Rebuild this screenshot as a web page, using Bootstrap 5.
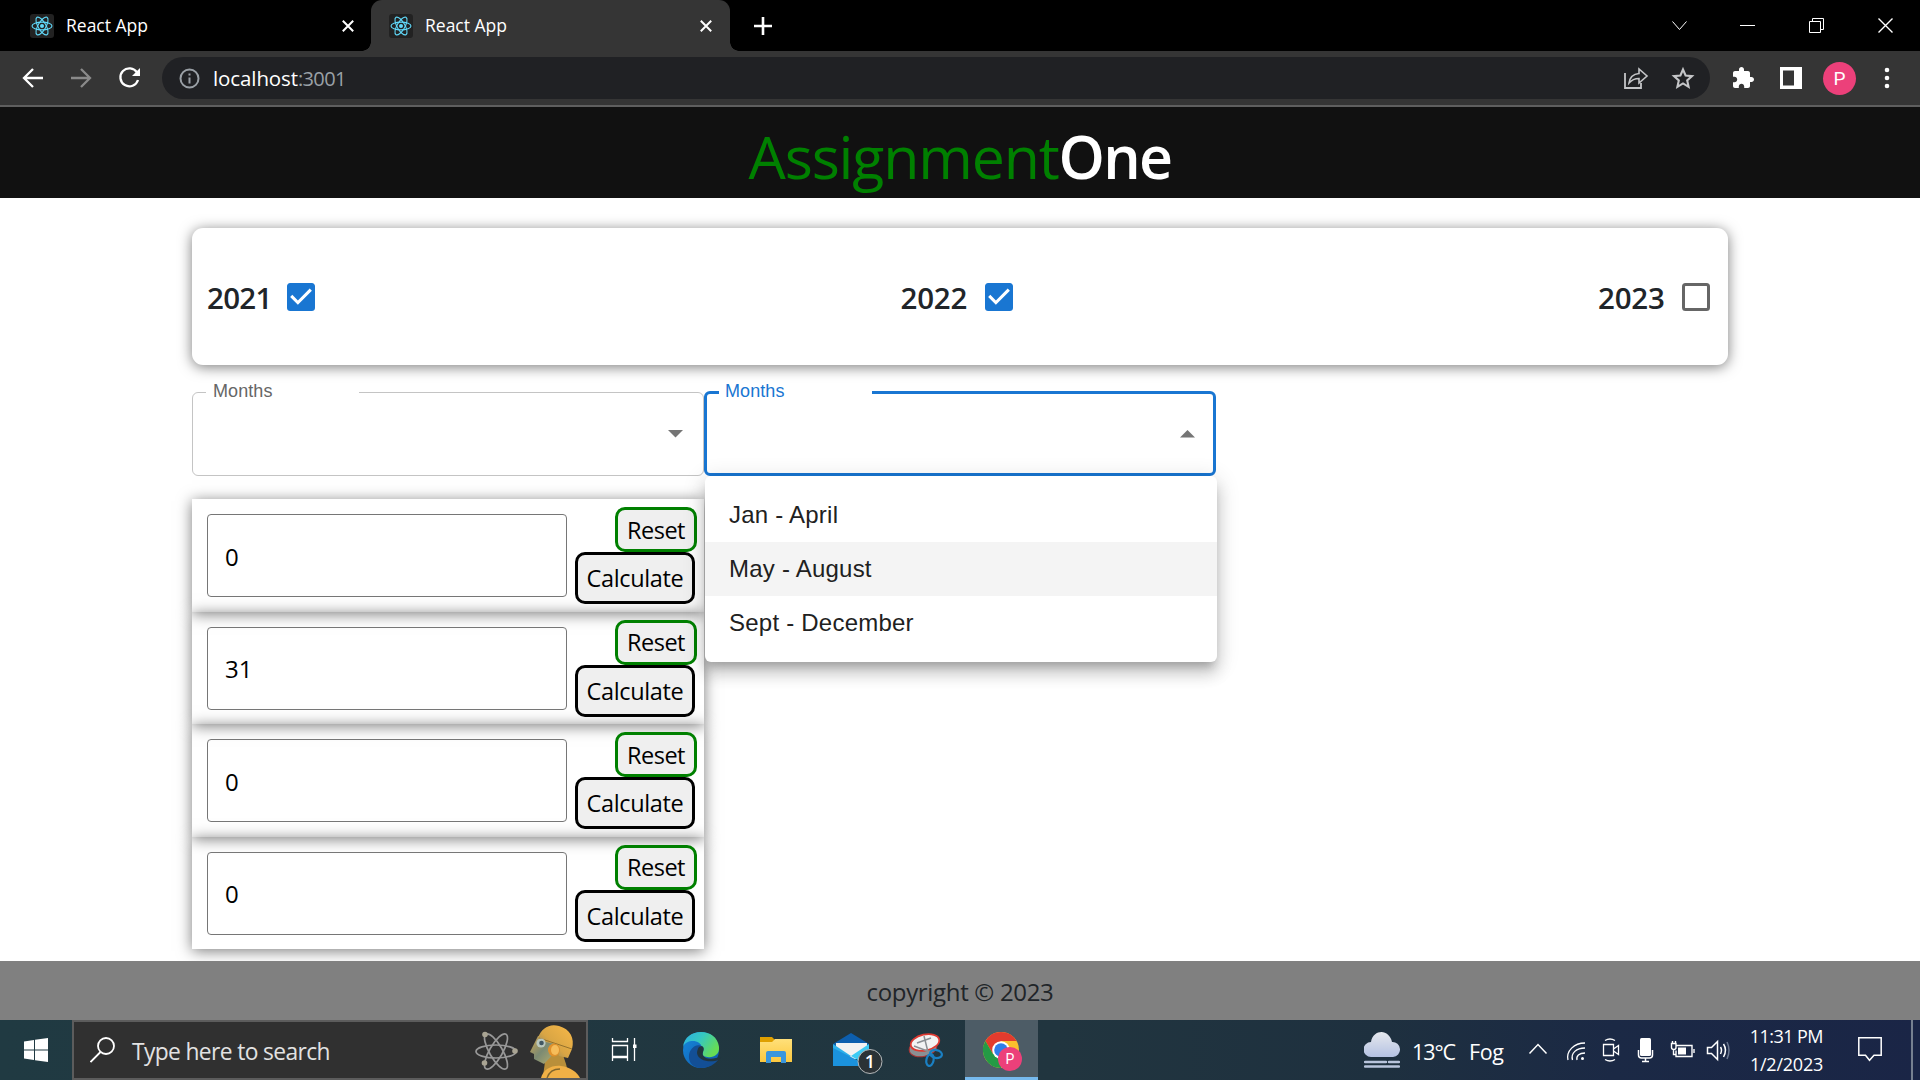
<!DOCTYPE html>
<html lang="en">
<head>
<meta charset="utf-8">
<title>React App</title>
<link href="https://cdn.jsdelivr.net/npm/bootstrap@5.3.0/dist/css/bootstrap.min.css" rel="stylesheet">
<style>
body{width:1920px;height:1080px;overflow:hidden;font-family:"Open Sans","Noto Sans",sans-serif;font-size:24px;line-height:1;background:#fff;color:#212529}
svg{display:block;flex:none}
.txt{white-space:nowrap;flex:none;line-height:1.36}
.tabstrip{height:51px;background:#000;color:#fff}
.tab-item{width:359px;height:51px;padding:0 18px 0 18px;font-size:17.5px}
.tab-item .txt{margin-left:12px}
.tab-first{width:371px;padding:0 17px 0 30px}
.tab-active{background:#353535;border-radius:11px 11px 0 0;position:relative}
.tab-active::before,.tab-active::after{content:"";position:absolute;bottom:0;width:9px;height:9px}
.tab-active::before{left:-9px;background:radial-gradient(circle at 0 0,transparent 8.5px,#353535 9px)}
.tab-active::after{right:-9px;background:radial-gradient(circle at 100% 0,transparent 8.5px,#353535 9px)}
.toolbar{height:56px;background:#353535;border-bottom:2px solid #5f5f5f;color:#fff}
.omnibox{width:1548px;height:42px;border-radius:21px;background:#202124;font-size:20.5px}
.omnibox .txt{padding-top:1px}
.host{margin-left:13px;letter-spacing:-.1px}
.port{color:#9aa0a6;font-size:20px;letter-spacing:-.65px}
.avatar{width:33px;height:33px;border-radius:50%;background:#ec407a;font:19px Roboto,sans-serif}
.brandbar{height:91px;background:#111;font-size:59px;padding-top:7px}
.brand-a{color:green;letter-spacing:-1.16px}
.brand-b{color:#fff;font-weight:600;letter-spacing:-1.7px}
.wrap{width:1536px}
.panel{border-radius:11px;box-shadow:0 2px 14px rgba(0,0,0,.52)}
.years{height:137px;margin-top:30px;padding:1px 18px 0 15px;font-size:29.5px;font-weight:600}
.years .txt{padding-top:3px;letter-spacing:-.2px}
.years .narrow{letter-spacing:-.7px}
.selects{margin-top:19px}
.sel{width:512px;height:92px;position:relative;font-family:"Liberation Sans",Arial,sans-serif}
.sel fieldset{position:absolute;inset:0;border:1px solid rgba(0,0,0,.23);border-radius:6px;padding:0 0 0 13px;margin:0;min-width:0}
.sel legend{float:none;width:153px;height:17px;line-height:15px;font-size:18px;letter-spacing:.08px;color:#666;padding:0 7px;margin:0}
.sel.focus fieldset{border:3px solid #1976d2;padding-left:12px}
.sel.focus legend{color:#1976d2;padding-left:6px}
.sel>svg{position:absolute;right:21px;top:46px}
.menu-pop{position:absolute;left:1px;top:92px;width:512px;height:186px;padding:12px 0;background:#fff;border-radius:6px;z-index:5;box-shadow:0 8px 8px -4px rgba(0,0,0,.2),0 12px 15px 1px rgba(0,0,0,.14),0 4px 21px 3px rgba(0,0,0,.12);font-size:24px;letter-spacing:.225px;color:#212121}
.menu-pop div{height:54px;line-height:54px;padding-left:24px}
.menu-pop .over{background:#f4f4f4}
.rows{margin-top:23px;width:512px}
.entry{height:112.5px;padding:8px 7px 0 15px;box-shadow:0 2px 14px rgba(0,0,0,.52)}
.field{width:360px;height:83px;margin-top:7px;padding:2px 0 0 17px;border:1px solid #767676;border-radius:4px;color:#000}
.pill{background:#efefef;border:3px solid green;border-radius:10px;color:#000;padding-top:2px}
.reset{width:82px;height:45px;font-size:23.5px;letter-spacing:-.5px}
.calc{width:120px;height:52px;border-color:#000;margin-right:2px;font-size:23.5px;letter-spacing:-.35px}
.foot{height:59px;margin-top:auto;background:#808080;padding-top:4px;letter-spacing:-.32px}
.taskbar{height:60px;background:linear-gradient(90deg,#203a42 0,#21353f 55%,#1e303f 72%,#1b2945 84%,#1a2546 100%);color:#fff}
.search{width:516px;height:60px;background:#303030;border:2px solid #5c5c5c;color:#e2e2e2}
.search-text{margin-left:17px;padding-top:3px;font-size:22.8px;letter-spacing:-.63px}
.weather{font-size:21.500px;padding-top:4px}
.temp{letter-spacing:-1.1px;margin-left:12px}
.sky{letter-spacing:-.3px;margin-left:14px}
.active-app{width:73px;height:60px;background:#4d5c66;border-bottom:3px solid #76b9ed}
.clock{font-size:18px;width:74px;margin-left:18px}
.clock .txt{line-height:28px}
.peek{margin-left:29px;width:2px;height:60px;background:#768090}
</style>
<script src="https://cdn.jsdelivr.net/npm/bootstrap@5.3.0/dist/js/bootstrap.bundle.min.js"></script>
</head>
<body class="d-flex flex-column">
<svg width="0" height="0" class="position-absolute"><defs>
<symbol id="react" viewBox="0 0 24 24"><rect width="24" height="24" rx="3" fill="#222"/><g fill="none" stroke="#61dafb" stroke-width="1.1"><ellipse cx="12" cy="12" rx="10" ry="3.9"/><ellipse cx="12" cy="12" rx="10" ry="3.9" transform="rotate(60 12 12)"/><ellipse cx="12" cy="12" rx="10" ry="3.9" transform="rotate(120 12 12)"/></g><circle cx="12" cy="12" r="2" fill="#61dafb"/></symbol>
<symbol id="x" viewBox="0 0 12 12"><path d="M.8.8l10.400 10.400M11.200.8L.8 11.200" stroke="#fff" stroke-width="2"/></symbol>
<symbol id="checked" viewBox="3 3 18 18"><path fill="#1976d2" d="M19 3H5c-1.110 0-2 .9-2 2v14c0 1.100.89 2 2 2h14c1.110 0 2-.9 2-2V5c0-1.100-.89-2-2-2zm-9 14l-5-5 1.410-1.410L10 14.170l7.590-7.590L19 8l-9 9z"/></symbol>
</defs></svg>

<header>
<div class="tabstrip d-flex align-items-center">
  <div class="tab-item tab-first d-flex align-items-center"><svg width="24" height="24"><use href="#react"/></svg><span class="txt">React App</span><svg class="ms-auto" width="12" height="12"><use href="#x"/></svg></div>
  <div class="tab-item tab-active d-flex align-items-center"><svg width="24" height="24"><use href="#react"/></svg><span class="txt">React App</span><svg class="ms-auto" width="12" height="12"><use href="#x"/></svg></div>
  <svg width="18" height="18" style="margin-left:24px"><path d="M9 0v18M0 9h18" stroke="#fff" stroke-width="2.600"/></svg>
  <svg class="ms-auto" width="248" height="26" viewBox="1672 9 248 26" fill="none" stroke="#fff" stroke-width="1"><path d="M1672.500 17.500l7 8 7-8M1740 21.500h15M1809.500 17.500h11v11h-11zM1812.500 17v-2.500h11v11h-3"/><path stroke-width="1.400" d="M1878.500 14.500l14 14M1892.500 14.500l-14 14"/></svg>
</div>
<div class="toolbar d-flex align-items-center">
  <svg width="162" height="30" viewBox="0 63 162 30" fill="none" stroke="#fff" stroke-width="2.300"><path d="M43 78H25M33 69l-9 9 9 9"/><path stroke="#8a8a8a" d="M71 78h18M81 69l9 9-9 9"/><path d="M137 72.500A9 9 0 1 0 138 80"/><path d="M140 68v8h-8z" fill="#fff" stroke="none"/></svg>
  <div class="omnibox d-flex align-items-center">
    <svg width="21" height="21" viewBox="0 0 21 21" style="margin-left:17px" fill="none" stroke="#9aa0a6" stroke-width="2"><circle cx="10.500" cy="10.500" r="9"/><path d="M10.500 9.500v6M10.500 5.500v2"/></svg>
    <span class="txt host">localhost</span><span class="txt port">:3001</span>
    <svg class="ms-auto" style="margin-right:15px" width="72" height="24" viewBox="1623 66 72 24" fill="none" stroke="#c4c5c7" stroke-width="1.800"><path d="M1625 73v15h16v-5"/><path d="M1629 83c1-7 5-9 10-9.500v-4.500l8 7-8 7v-4.500c-4 0-7 1-10 4.500z" stroke-width="1.600"/><path d="M1683 69.500l2.600 6 6.400.600-4.800 4.300 1.400 6.400-5.600-3.400-5.600 3.400 1.400-6.400-4.800-4.300 6.400-.600z" stroke-width="2.100"/></svg>
  </div>
  <svg style="margin-left:21px" width="24" height="24" viewBox="0 0 24 24"><path fill="#fff" d="M20.500 11H19V7c0-1.100-.9-2-2-2h-4V3.500C13 2.120 11.880 1 10.500 1S8 2.120 8 3.500V5H4c-1.100 0-1.990.9-1.990 2v3.800H3.500c1.490 0 2.700 1.210 2.700 2.700s-1.210 2.700-2.700 2.700H2V20c0 1.100.9 2 2 2h3.800v-1.500c0-1.490 1.210-2.700 2.700-2.700s2.700 1.210 2.700 2.700V22H17c1.100 0 2-.9 2-2v-4h1.500c1.380 0 2.500-1.120 2.500-2.500S21.880 11 20.500 11z"/></svg>
  <svg style="margin-left:25px" width="22" height="22"><path fill="#fff" fill-rule="evenodd" d="M0 0h22v22H0zM3 3.500v15h11v-15z"/></svg>
  <div class="avatar d-flex align-items-center justify-content-center" style="margin-left:21px">P</div>
  <svg style="margin-left:28px" width="6" height="22" fill="#fff"><circle cx="3" cy="3" r="2.300"/><circle cx="3" cy="11" r="2.300"/><circle cx="3" cy="19" r="2.300"/></svg>
</div>
</header>

<div class="brandbar d-flex align-items-center justify-content-center"><span class="txt brand-a">Assignment</span><span class="txt brand-b">One</span></div>

<main class="wrap mx-auto">
  <div class="panel years d-flex align-items-center justify-content-between">
    <div class="d-flex align-items-center justify-content-between" style="width:108px"><span class="txt narrow">2021</span><svg width="28" height="28"><use href="#checked"/></svg></div>
    <div class="d-flex align-items-center justify-content-between" style="width:112px"><span class="txt">2022</span><svg width="28" height="28"><use href="#checked"/></svg></div>
    <div class="d-flex align-items-center justify-content-between" style="width:112px"><span class="txt">2023</span><svg width="28" height="28"><rect x="1.500" y="1.500" width="25" height="25" rx="2" fill="none" stroke="#666" stroke-width="3"/></svg></div>
  </div>
  <div class="selects d-flex">
    <div class="sel"><fieldset><legend>Months</legend></fieldset><svg width="15" height="8"><path d="M0 0h15L7.500 7.500z" fill="#757575"/></svg></div>
    <div class="sel focus"><fieldset><legend>Months</legend></fieldset><svg width="15" height="8"><path d="M0 7.500h15L7.500 0z" fill="#757575"/></svg>
      <div class="menu-pop"><div>Jan - April</div><div class="over">May - August</div><div>Sept - December</div></div>
    </div>
  </div>
  <div class="rows">
    <div class="entry d-flex justify-content-between align-items-start"><div class="field d-flex align-items-center">0</div><div class="d-flex flex-column align-items-end"><div class="pill reset d-flex align-items-center justify-content-center"><span class="txt">Reset</span></div><div class="pill calc d-flex align-items-center justify-content-center"><span class="txt">Calculate</span></div></div></div>
    <div class="entry d-flex justify-content-between align-items-start"><div class="field d-flex align-items-center">31</div><div class="d-flex flex-column align-items-end"><div class="pill reset d-flex align-items-center justify-content-center"><span class="txt">Reset</span></div><div class="pill calc d-flex align-items-center justify-content-center"><span class="txt">Calculate</span></div></div></div>
    <div class="entry d-flex justify-content-between align-items-start"><div class="field d-flex align-items-center">0</div><div class="d-flex flex-column align-items-end"><div class="pill reset d-flex align-items-center justify-content-center"><span class="txt">Reset</span></div><div class="pill calc d-flex align-items-center justify-content-center"><span class="txt">Calculate</span></div></div></div>
    <div class="entry d-flex justify-content-between align-items-start"><div class="field d-flex align-items-center">0</div><div class="d-flex flex-column align-items-end"><div class="pill reset d-flex align-items-center justify-content-center"><span class="txt">Reset</span></div><div class="pill calc d-flex align-items-center justify-content-center"><span class="txt">Calculate</span></div></div></div>
  </div>
</main>

<div class="foot d-flex align-items-center justify-content-center"><span class="txt">copyright © 2023</span></div>

<footer class="taskbar d-flex align-items-center">
  <svg width="72" height="24" viewBox="0 0 72 24" fill="#fff"><path d="M24 3.500l10-1.500v9.500H24zM35 1.800L48 0v11.500H35zM24 12.500h10V22l-10-1.500zM35 12.500h13V24l-13-1.800z"/></svg>
  <div class="search d-flex">
    <svg class="align-self-center" style="margin-left:16px" width="25" height="26" fill="none" stroke="#fff" stroke-width="1.800"><circle cx="16" cy="9" r="8"/><path d="M10.500 15L.5 25"/></svg>
    <span class="txt search-text align-self-center">Type here to search</span>
    <svg class="ms-auto" width="112" height="56" viewBox="474 1022 112 56">
      <defs><linearGradient id="gold" x1="0" y1="1" x2="1" y2="0"><stop offset="0" stop-color="#6d7a68"/><stop offset=".45" stop-color="#d9a544"/><stop offset="1" stop-color="#f8b948"/></linearGradient><linearGradient id="face" x1="0" y1="0" x2="1" y2="1"><stop offset="0" stop-color="#d8a74c"/><stop offset=".5" stop-color="#7b8a73"/><stop offset="1" stop-color="#b9b06d"/></linearGradient></defs>
      <g fill="none" stroke="#989898" stroke-width="1.700"><ellipse cx="496" cy="1051.500" rx="20" ry="6.500"/><ellipse cx="496" cy="1051.500" rx="20" ry="6.500" transform="rotate(60 496 1051.500)"/><ellipse cx="496" cy="1051.500" rx="20" ry="6.500" transform="rotate(120 496 1051.500)"/></g>
      <g fill="#a9a493"><circle cx="485" cy="1034.500" r="2.800"/><circle cx="515" cy="1051" r="2.800"/><circle cx="484.500" cy="1063" r="2.800"/></g>
      <path d="M545 1062l2-7 15-3 4 12 3 12H543z" fill="#b98f3a"/><path d="M541 1078c2-8 10-13 20-12 9 1 16 6 19 12z" fill="#f0b046"/><path d="M547 1078c2-6 7-9 13-9" fill="none" stroke="#80652c" stroke-width="1.300"/>
      <path d="M538 1036l-8 16 4 2v5l10 5 13-14-6-16z" fill="url(#face)"/>
      <path d="M538 1038c3-10 12-15 21-12 11 3 16 12 13 23l-4 9-9-2-4-12-9-2z" fill="url(#gold)"/>
      <path d="M539 1038l33 11" fill="none" stroke="#94712c"/>
      <ellipse cx="554" cy="1050" rx="6" ry="6.500" fill="#e0912c"/><ellipse cx="555" cy="1050" rx="4" ry="5" fill="#f6bd5a"/>
      <circle cx="541" cy="1043" r="4.600" fill="#b9c7be"/><circle cx="541.500" cy="1043" r="2.300" fill="#405662"/>
    </svg>
  </div>
  <svg width="377" height="60" viewBox="588 1020 377 60">
    <defs>
      <linearGradient id="e1" x1="0" x2="1" y1="0" y2=".5"><stop offset="0" stop-color="#2caee5"/><stop offset=".5" stop-color="#36c8c0"/><stop offset="1" stop-color="#66dc55"/></linearGradient>
      <linearGradient id="e2" x1="0" x2="1" y1="0" y2="1"><stop offset="0" stop-color="#1789dd"/><stop offset="1" stop-color="#0d57a8"/></linearGradient>
      <linearGradient id="fold" x1="0" x2="0" y1="0" y2="1"><stop offset="0" stop-color="#ffe07a"/><stop offset="1" stop-color="#fcc83f"/></linearGradient>
    </defs>
    <g fill="none" stroke="#fff" stroke-width="1.300"><path d="M612.500 1038v3.500h15V1038M612.500 1045.500h15v11h-15zM612.500 1061v-3.500h15v3.500"/><path d="M634.500 1038v23"/></g><path fill="#fff" d="M633 1044.500h3.500v3.500H633z"/>
    <circle cx="701" cy="1050" r="18" fill="url(#e2)"/>
    <path d="M683 1047c2-20 34-20 36 0 1 9-8 12-16 9-4-2-2-4-1-8-1-9-16-9-19-1z" fill="url(#e1)"/>
    <path d="M719 1059c-5 1-13 2-16-4-1-3 1-3 0-8-6-5-13 1-14 8-1 8 5 13 12 13 8 0 14-4 18-9z" fill="#134f96"/>
    <path d="M699 1047c4-2 6 1 4 5-2 5 4 8 13 6l5-1-2 3c-9 3-21 1-22-7 0-2 1-5 2-6z" fill="#21353f"/>
    <path d="M760 1037h12l3 3v5h-15z" fill="#dfa000"/><path d="M760 1042h12l3-3h17v23h-32z" fill="url(#fold)"/><path d="M766 1063v-10q0-2 2-2h16q2 0 2 2v10h-5v-6h-10v6z" fill="#3a96dd"/>
    <path d="M833 1044l18-11 18 11-8 10h-20z" fill="#0d5fae"/><path d="M836 1043h31v10l-15 8-16-8z" fill="#f2f2f2"/><path d="M833 1044l18 12-17 10h-1z" fill="#2cb0ea"/><path d="M869 1044l-18 12 17 10h1z" fill="#3ccbf4"/><path d="M833 1066v-18l36 18z" fill="#1b92dd"/>
    <circle cx="870" cy="1061.500" r="12" fill="#2b3236" stroke="#b5b9bb"/><text x="870" y="1068" text-anchor="middle" font-size="18" font-weight="600" fill="#fff">1</text>
    <ellipse cx="923" cy="1048" rx="14" ry="8.500" fill="#8b9094" stroke="#a33" transform="rotate(-12 923 1048)"/><ellipse cx="925" cy="1042.500" rx="14.500" ry="8" fill="#f3f3f3" stroke="#dd3a32" stroke-width="1.800" transform="rotate(-12 925 1042.500)"/>
    <path d="M924 1036l4 16M914 1046l16 6M917 1043l14-5" stroke="#8b8f93" stroke-width="1.500" fill="none"/><g fill="none" stroke="#1a80c4" stroke-width="2.200"><ellipse cx="936" cy="1054" rx="6" ry="4" transform="rotate(10 936 1054)"/><ellipse cx="930" cy="1060" rx="3.600" ry="6" transform="rotate(12 930 1060)"/></g>
  </svg>
  <div class="active-app"><svg width="73" height="57" viewBox="965 1020 73 57">
    <circle cx="1001" cy="1050" r="18" fill="#fbc02d"/><path d="M985.400 1041A18 18 0 0 1 1016.600 1041H1001l-8 13z" fill="#e33b2e"/><path d="M985.400 1041A18 18 0 0 0 1001 1068l8-14h-16z" fill="#249a45"/><circle cx="1001" cy="1050" r="8.800" fill="#fff"/><circle cx="1001" cy="1050" r="6.800" fill="#2f7de9"/>
    <circle cx="1010" cy="1059" r="12" fill="#ec407a"/><text x="1010" y="1064" text-anchor="middle" font-family="Roboto" font-size="14" fill="#fff">P</text></svg></div>
  <svg style="margin-left:326px" width="36" height="36" viewBox="0 0 36 36"><defs><linearGradient id="cl" x1="0" x2="0" y1="0" y2="1"><stop offset="0" stop-color="#e6e8ee"/><stop offset="1" stop-color="#b4c2e2"/></linearGradient></defs><path d="M7 25a7.500 7.500 0 0 1 0-15C8 3 13 0 17.500 0S27 4 28 10a7.500 7.500 0 0 1 1 15z" fill="url(#cl)"/><path d="M1 30h21M25 30h10M1 34.500h34" stroke="#b8c4dc" stroke-width="2.400" stroke-linecap="round"/></svg>
  <div class="weather d-flex"><span class="txt temp">13°C</span><span class="txt sky">Fog</span></div>
  <svg class="ms-auto" width="206" height="60" viewBox="1525 1020 206 60" fill="none" stroke="#fff" stroke-width="1.500">
    <path d="M1529.500 1053.500l8.500-9 8.500 9"/>
    <path d="M1568 1060c-2-9 6-17 17-17M1572.500 1060c-2-7 4-12 12.500-12M1577 1060c-1-4 2-7 8-7" stroke-width="1.300"/><circle cx="1582.500" cy="1058.500" r="1.500" fill="#fff" stroke="none"/>
    <path d="M1603.500 1044.500h10v11h-10zM1613.500 1049l5-3.500v9l-5-3.500M1605 1040.500q5-3 10 0M1605 1059.500q5 3 10 0" stroke-width="1.300"/>
    <rect x="1640" y="1038" width="11" height="18" rx="1.500" fill="#fff" stroke="none"/><path d="M1638.500 1050v5q0 3 3 3h8q3 0 3-3v-5M1645.500 1058v3.500M1642 1061.500h7"/>
    <path d="M1676 1045.500h16v11h-16v-6M1694 1049v4M1671.500 1043.500h4.500v4q0 2-2.200 2t-2.300-2zM1672.500 1041v2.500M1675.500 1041v2.500M1673.500 1049.500v5h3" stroke-width="1.400"/><path d="M1678 1047.500h8v7h-8z" fill="#fff" stroke="none"/>
    <path d="M1707.500 1047.500h4l6-6v18l-6-6h-4zM1720.500 1047q2 3 0 7M1723.500 1044q4 6 0 13"/><path d="M1727 1042q4 8 0 17" stroke="#6c7890"/>
  </svg>
  <div class="clock"><div class="d-flex justify-content-end"><span class="txt" style="letter-spacing:-.55px">11:31 PM</span></div><div class="d-flex justify-content-end"><span class="txt" style="letter-spacing:-.24px">1/2/2023</span></div></div>
  <svg style="margin-left:35px" width="24" height="26" viewBox="0 0 24 26" fill="none" stroke="#fff" stroke-width="1.500"><path d="M.8.800h22.400v17.500H16l-4.500 5-4-5H.8z"/></svg>
  <div class="peek"></div><div style="width:7px"></div>
</footer>
</body>
</html>
